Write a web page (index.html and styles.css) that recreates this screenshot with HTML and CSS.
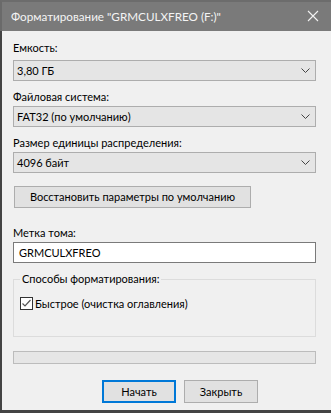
FILE: index.html
```html
<!DOCTYPE html>
<html lang="ru">
<head>
<meta charset="utf-8">
<title>Форматирование</title>
<link rel="stylesheet" href="styles.css">
</head>
<body>
<div class="window">
  <div class="titlebar">
    <span class="title">Форматирование "GRMCULXFREO (F:)"</span>
    <svg class="close" width="12" height="12" viewBox="0 0 12 12"><path d="M1 1 L11 11 M11 1 L1 11" stroke="#f2f2f2" stroke-width="1.1" fill="none"/></svg>
  </div>
  <div class="client">
    <div class="label first">Емкость:</div>
    <div class="combo"><span>3,80 ГБ</span><svg class="chev" width="9" height="5" viewBox="0 0 9 5"><path d="M0.5 0.5 L4.5 4.5 L8.5 0.5" stroke="#444" stroke-width="1" fill="none"/></svg></div>
    <div class="label">Файловая система:</div>
    <div class="combo"><span>FAT32 (по умолчанию)</span><svg class="chev" width="9" height="5" viewBox="0 0 9 5"><path d="M0.5 0.5 L4.5 4.5 L8.5 0.5" stroke="#444" stroke-width="1" fill="none"/></svg></div>
    <div class="label">Размер единицы распределения:</div>
    <div class="combo"><span>4096 байт</span><svg class="chev" width="9" height="5" viewBox="0 0 9 5"><path d="M0.5 0.5 L4.5 4.5 L8.5 0.5" stroke="#444" stroke-width="1" fill="none"/></svg></div>
    <div class="btn restore">Восстановить параметры по умолчанию</div>
    <div class="label vol">Метка тома:</div>
    <div class="input">GRMCULXFREO</div>
    <fieldset class="group">
      <legend>Способы форматирования:</legend>
      <div class="check-row">
        <span class="checkbox"><svg width="11" height="11" viewBox="0 0 11 11"><path d="M1.5 5.5 L4 8 L9.5 2" stroke="#555" stroke-width="1.2" fill="none"/></svg></span>
        <span>Быстрое (очистка оглавления)</span>
      </div>
    </fieldset>
    <div class="progress"></div>
    <div class="actions">
      <div class="btn act primary">Начать</div>
      <div class="btn act">Закрыть</div>
    </div>
  </div>
</div>
</body>
</html>
```
FILE: styles.css
```css
html, body {
  margin: 0;
  padding: 0;
  background: #f0f0f0;
}
body {
  font-family: Lato, "Noto Sans", sans-serif;
  font-size: 11px;
  color: #000;
}
.window {
  width: 331px;
  height: 413px;
  display: flex;
  flex-direction: column;
  overflow: hidden;
}
.titlebar {
  height: 31px;
  box-sizing: border-box;
  flex: none;
  background: #7a7a7a;
  border-top: 2px solid #6c6c6c;
  border-left: 2px solid #6a6a6a;
  display: flex;
  align-items: center;
  justify-content: space-between;
  padding: 0 12px 0 9px;
  color: #f4f4f4;
}
.title {
  font-size: 11.7px;
  line-height: 16px;
  padding-bottom: 1px;
  white-space: nowrap;
}
.close { display: block; margin-bottom: 1px; }
.client {
  flex: 1;
  box-sizing: border-box;
  background: #f0f0f0;
  border-left: 2px solid #434343;
  border-bottom: 3px solid #444;
  padding: 9px 15px 0 11px;
  display: flex;
  flex-direction: column;
  align-items: flex-start;
}
.label {
  line-height: 16px;
  height: 16px;
  margin-top: 8px;
  margin-bottom: 1px;
  white-space: nowrap;
}
.label.first { margin-top: 0; margin-bottom: 4px; }
.label.vol { margin-top: 17px; }
.combo {
  align-self: stretch;
  height: 21px;
  box-sizing: border-box;
  background: #e5e5e5;
  border: 1px solid #adadad;
  display: flex;
  align-items: center;
  justify-content: space-between;
  padding: 0 5px 0 3px;
  line-height: 16px;
}
.chev { display: block; }
.btn {
  box-sizing: border-box;
  background: #e1e1e1;
  border: 1px solid #adadad;
  display: flex;
  align-items: center;
  justify-content: center;
  white-space: nowrap;
  line-height: 16px;
}
.restore {
  margin-top: 13px;
  margin-left: 1px;
  width: 237px;
  height: 22px;
}
.input {
  align-self: stretch;
  height: 21px;
  box-sizing: border-box;
  background: #fff;
  border: 1px solid #7a7a7a;
  padding: 0 5px;
  line-height: 19px;
}
.group {
  align-self: stretch;
  margin: 8px 0 0 0;
  border: 1px solid #dcdcdc;
  padding: 0 6px 0 6px;
  height: 66px;
  box-sizing: border-box;
  min-width: 0;
}
.group legend {
  padding: 0 2px;
  line-height: 16px;
  margin-left: 0;
}
.check-row {
  display: flex;
  align-items: center;
  gap: 2px;
  margin-top: 10px;
  line-height: 13px;
}
.checkbox {
  width: 13px;
  height: 13px;
  box-sizing: border-box;
  border: 1px solid #333;
  background: #fff;
  display: flex;
  align-items: center;
  justify-content: center;
}
.checkbox svg { display: block; }
.progress {
  align-self: stretch;
  margin-top: 14px;
  height: 13px;
  box-sizing: border-box;
  background: #e6e6e6;
  border: 1px solid #bcbcbc;
}
.actions {
  display: flex;
  gap: 8px;
  margin-top: 16px;
  margin-left: 89px;
}
.act {
  width: 74px;
  height: 23px;
}
.act.primary {
  border: 2px solid #0078d7;
}
```
